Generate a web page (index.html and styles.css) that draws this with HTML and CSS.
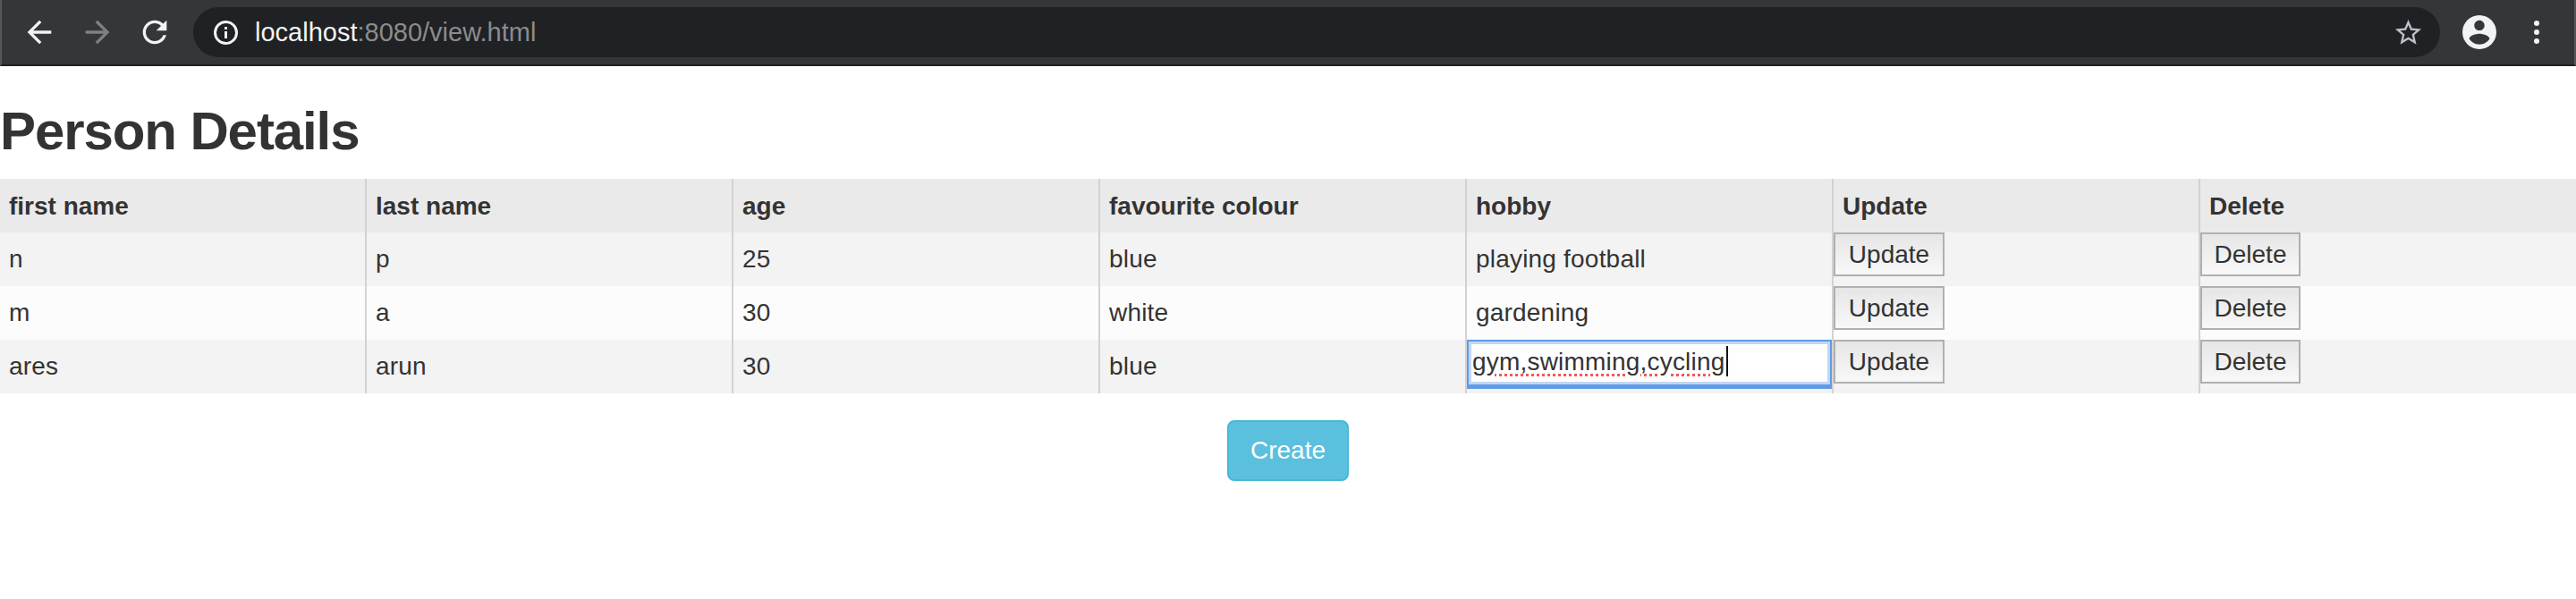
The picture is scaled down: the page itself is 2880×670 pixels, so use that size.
FILE: index.html
```html
<!DOCTYPE html>
<html lang="en">
<head>
    <meta charset="UTF-8">
    <title>Person Details</title>
    <link rel="stylesheet" href="styles.css">
</head>
<body>

<div class="toolbar">
    <svg class="nav-icon" viewBox="0 0 24 24"><path d="M20 11H7.83l5.59-5.59L12 4l-8 8 8 8 1.41-1.41L7.83 13H20v-2z"/></svg>
    <svg class="nav-icon nav-off" viewBox="0 0 24 24"><path d="M4 11h12.17l-5.59-5.59L12 4l8 8-8 8-1.41-1.41L16.17 13H4v-2z"/></svg>
    <svg class="nav-icon" viewBox="0 0 24 24"><path d="M17.65 6.35C16.2 4.9 14.21 4 12 4c-4.42 0-7.99 3.58-7.99 8s3.57 8 7.99 8c3.73 0 6.84-2.55 7.73-6h-2.08c-.82 2.33-3.04 4-5.65 4-3.31 0-6-2.69-6-6s2.69-6 6-6c1.66 0 3.14.69 4.22 1.78L13 11h7V4l-2.35 2.35z"/></svg>
    <div class="omnibox">
        <svg class="info-icon" viewBox="0 0 27 27">
            <circle cx="13.5" cy="13.5" r="12" fill="none" stroke="#f1f3f4" stroke-width="3"/>
            <rect x="12" y="12" width="3" height="8" fill="#f1f3f4"/>
            <rect x="12" y="7" width="3" height="3" fill="#f1f3f4"/>
        </svg>
        <div class="url"><span class="host">localhost</span>:8080/view.html</div>
        <svg class="star-icon" viewBox="0 0 24 24"><path d="M22 9.24l-7.19-.62L12 2 9.19 8.63 2 9.24l5.46 4.73L5.82 21 12 17.27 18.18 21l-1.63-7.03L22 9.24zM12 15.4l-3.76 2.27 1-4.28-3.32-2.88 4.38-.38L12 6.1l1.71 4.04 4.38.38-3.32 2.88 1 4.28L12 15.4z"/></svg>
    </div>
    <svg class="avatar-icon" viewBox="2 2 20 20"><path d="M12 2C6.48 2 2 6.48 2 12s4.48 10 10 10 10-4.48 10-10S17.52 2 12 2zm0 3c1.66 0 3 1.34 3 3s-1.34 3-3 3-3-1.34-3-3 1.34-3 3-3zm0 14.2c-2.5 0-4.71-1.28-6-3.22.03-1.99 4-3.08 6-3.08 1.99 0 5.97 1.09 6 3.08-1.29 1.94-3.5 3.22-6 3.22z"/></svg>
    <div class="menu-dots">
        <span></span>
        <span></span>
        <span></span>
    </div>
</div>

<h1 class="page-title">Person Details</h1>

<table class="people">
    <thead>
        <tr>
            <th>first name</th>
            <th>last name</th>
            <th>age</th>
            <th>favourite colour</th>
            <th>hobby</th>
            <th>Update</th>
            <th>Delete</th>
        </tr>
    </thead>
    <tbody>
        <tr>
            <td>n</td>
            <td>p</td>
            <td>25</td>
            <td>blue</td>
            <td>playing football</td>
            <td class="btn-cell"><button class="row-btn update-btn">Update</button></td>
            <td class="btn-cell"><button class="row-btn delete-btn">Delete</button></td>
        </tr>
        <tr>
            <td>m</td>
            <td>a</td>
            <td>30</td>
            <td>white</td>
            <td>gardening</td>
            <td class="btn-cell"><button class="row-btn update-btn">Update</button></td>
            <td class="btn-cell"><button class="row-btn delete-btn">Delete</button></td>
        </tr>
        <tr>
            <td>ares</td>
            <td>arun</td>
            <td>30</td>
            <td>blue</td>
            <td class="btn-cell">
                <div class="cell-edit"><span class="misspelt">gym,swimming,cycling</span><span class="caret"></span></div>
            </td>
            <td class="btn-cell"><button class="row-btn update-btn">Update</button></td>
            <td class="btn-cell"><button class="row-btn delete-btn">Delete</button></td>
        </tr>
    </tbody>
</table>

<div class="actions">
    <button class="create-btn">Create</button>
</div>

</body>
</html>
```

FILE: styles.css
```css
*{
    box-sizing: border-box;
}
body{
    margin: 0;
    background: #fff;
    color: #333;
    font-family: "Liberation Sans", Arial, sans-serif;
    font-size: 28px;
    line-height: 40px;
}

/* browser bar */
.toolbar{
    display: flex;
    align-items: center;
    height: 74px;
    padding-left: 22px;
    background: #35363a;
    border-bottom: 2px solid #202124;
    border-left: 2px solid #55565a;
    border-right: 2px solid #55565a;
}
.nav-icon{
    width: 40px;
    height: 40px;
    margin-right: 24.5px;
    fill: #f1f3f4;
}
.nav-off{
    fill: #7f8083;
}
.omnibox{
    display: flex;
    align-items: center;
    width: 2512px;
    height: 56px;
    margin-left: -1.5px;
    padding: 0 18px 0 23px;
    background: #202124;
    border-radius: 28px;
}
.info-icon{
    width: 27px;
    height: 27px;
    margin-right: 19px;
}
.url{
    flex: 1;
    color: #8b8c8e;
    font-size: 29px;
}
.host{
    color: #f1f3f4;
}
.star-icon{
    width: 35px;
    height: 35px;
    fill: #bdc1c6;
}
.avatar-icon{
    width: 38px;
    height: 38px;
    margin-left: 25px;
    fill: #f1f3f4;
}
.menu-dots{
    display: flex;
    flex-direction: column;
    gap: 4px;
    margin-left: 42px;
}
.menu-dots span{
    width: 6px;
    height: 6px;
    background: #f1f3f4;
    border-radius: 50%;
}

.page-title{
    margin: 40px 0 20px;
    font-size: 60px;
    line-height: 66px;
    font-weight: bold;
    letter-spacing: -1.1px;
}

/* table */
.people{
    width: 2880px;
    table-layout: fixed;
    border-collapse: separate;
    border-spacing: 0;
}
.people th,
.people td{
    width: 410px;
    height: 60px;
    padding: 10px;
    text-align: left;
    vertical-align: top;
    border-left: 2px solid #d2d2d2;
}
.people th:first-child,
.people td:first-child{
    width: 408px;
    border-left: 0;
}
.people th:last-child,
.people td:last-child{
    width: 422px;
}
.people th{
    padding: 11px 10px 9px;
    background: #eaeaea;
}
.people td{
    letter-spacing: .2px;
}
.people tbody tr:nth-child(odd) td{
    background: #f3f3f3;
}
.people tbody tr:nth-child(even) td{
    background: #fcfcfc;
}
.people .btn-cell{
    padding: 0;
}
.row-btn{
    display: block;
    height: 49px;
    padding: 0;
    color: #333;
    font-family: inherit;
    font-size: 28px;
    background: linear-gradient(#e6e6e6, #f8f8f8);
    border: 2px solid #b0b0b0;
}
.update-btn{
    width: 124px;
}
.delete-btn{
    width: 112px;
}

/* hobby being edited */
.cell-edit{
    height: 55px;
    padding-left: 4px;
    background: #fff;
    border: 2px solid #5f9bea;
    border-bottom-width: 5px;
    box-shadow: inset 0 0 0 3px #c3d6f2;
    line-height: 46px;
    white-space: nowrap;
}
.misspelt{
    text-decoration: underline dotted #f4565a 3px;
    text-underline-offset: 4px;
}
.caret{
    display: inline-block;
    width: 2px;
    height: 34px;
    margin-left: 1px;
    background: #111;
    vertical-align: -7px;
}

.actions{
    display: flex;
    justify-content: center;
    margin-top: 30px;
}
.create-btn{
    height: 68px;
    padding: 0 24px;
    color: #fff;
    font-family: inherit;
    font-size: 28px;
    background: #5bc0de;
    border: 2px solid #46b8da;
    border-radius: 8px;
}
```
